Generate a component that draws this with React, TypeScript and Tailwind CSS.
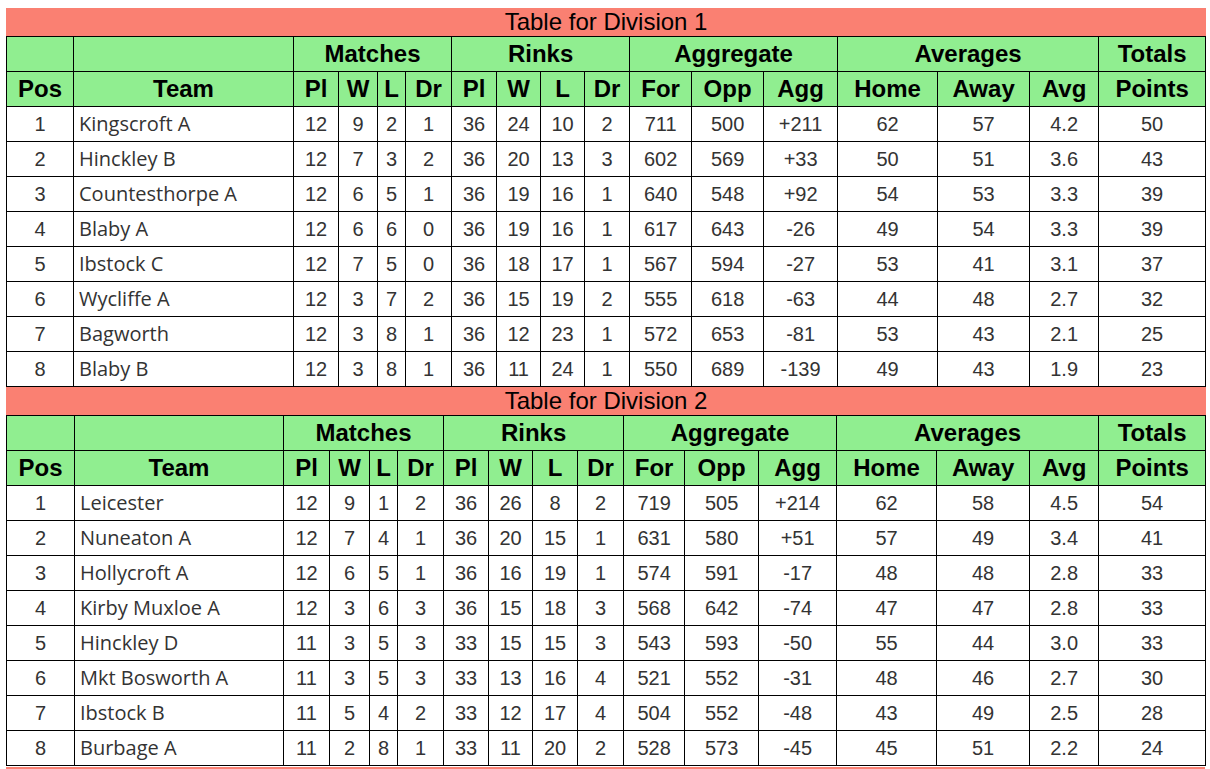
type Row = [number, string, ...(string | number)[]];

const division1: Row[] = [
  [1, "Kingscroft A", 12, 9, 2, 1, 36, 24, 10, 2, 711, 500, "+211", 62, 57, "4.2", 50],
  [2, "Hinckley B", 12, 7, 3, 2, 36, 20, 13, 3, 602, 569, "+33", 50, 51, "3.6", 43],
  [3, "Countesthorpe A", 12, 6, 5, 1, 36, 19, 16, 1, 640, 548, "+92", 54, 53, "3.3", 39],
  [4, "Blaby A", 12, 6, 6, 0, 36, 19, 16, 1, 617, 643, "-26", 49, 54, "3.3", 39],
  [5, "Ibstock C", 12, 7, 5, 0, 36, 18, 17, 1, 567, 594, "-27", 53, 41, "3.1", 37],
  [6, "Wycliffe A", 12, 3, 7, 2, 36, 15, 19, 2, 555, 618, "-63", 44, 48, "2.7", 32],
  [7, "Bagworth", 12, 3, 8, 1, 36, 12, 23, 1, 572, 653, "-81", 53, 43, "2.1", 25],
  [8, "Blaby B", 12, 3, 8, 1, 36, 11, 24, 1, 550, 689, "-139", 49, 43, "1.9", 23],
];

const division2: Row[] = [
  [1, "Leicester", 12, 9, 1, 2, 36, 26, 8, 2, 719, 505, "+214", 62, 58, "4.5", 54],
  [2, "Nuneaton A", 12, 7, 4, 1, 36, 20, 15, 1, 631, 580, "+51", 57, 49, "3.4", 41],
  [3, "Hollycroft A", 12, 6, 5, 1, 36, 16, 19, 1, 574, 591, "-17", 48, 48, "2.8", 33],
  [4, "Kirby Muxloe A", 12, 3, 6, 3, 36, 15, 18, 3, 568, 642, "-74", 47, 47, "2.8", 33],
  [5, "Hinckley D", 11, 3, 5, 3, 33, 15, 15, 3, 543, 593, "-50", 55, 44, "3.0", 33],
  [6, "Mkt Bosworth A", 11, 3, 5, 3, 33, 13, 16, 4, 521, 552, "-31", 48, 46, "2.7", 30],
  [7, "Ibstock B", 11, 5, 4, 2, 33, 12, 17, 4, 504, 552, "-48", 43, 49, "2.5", 28],
  [8, "Burbage A", 11, 2, 8, 1, 33, 11, 20, 2, 528, 573, "-45", 45, 51, "2.2", 24],
];

// column widths measured off the screenshot, one set per table (auto layout made them differ)
const cols1 = [
  "w-[67px]", "w-[220px]", "w-[45px]", "w-[39px]", "w-[28px]", "w-[46px]",
  "w-[45px]", "w-[44px]", "w-[44px]", "w-[45px]", "w-[62px]", "w-[72px]",
  "w-[74px]", "w-[100px]", "w-[92px]", "w-[69px]", "w-[107px]",
];
const cols2 = [
  "w-[68px]", "w-[209px]", "w-[46px]", "w-[40px]", "w-[28px]", "w-[46px]",
  "w-[45px]", "w-[44px]", "w-[45px]", "w-[46px]", "w-[61px]", "w-[74px]",
  "w-[78px]", "w-[100px]", "w-[93px]", "w-[69px]", "w-[107px]",
];

const subHeads = ["Pos", "Team", "Pl", "W", "L", "Dr", "Pl", "W", "L", "Dr", "For", "Opp", "Agg", "Home", "Away", "Avg", "Points"];

const th = "border border-black bg-[#90ee90] text-center text-[24px] leading-[28px] font-bold text-black p-0";
const td = "border border-black text-center text-[20px] text-[#333] p-0";

function DivisionTable({ title, rows, cols }: { title: string; rows: Row[]; cols: string[] }) {
  return (
    <table className="w-[1199px] table-fixed border-collapse font-['Liberation_Sans',Arial,sans-serif]">
      <caption className="h-[28px] bg-[#fa8072] text-center text-[24px] leading-[28px] text-black">
        {title}
      </caption>
      <colgroup>
        {cols.map((c, i) => (
          <col key={i} className={c} />
        ))}
      </colgroup>
      <thead>
        <tr className="h-[35px]">
          <th className={th}></th>
          <th className={th}></th>
          <th className={th} colSpan={4}>Matches</th>
          <th className={th} colSpan={4}>Rinks</th>
          <th className={th} colSpan={3}>Aggregate</th>
          <th className={th} colSpan={3}>Averages</th>
          <th className={th}>Totals</th>
        </tr>
        <tr className="h-[35px]">
          {subHeads.map((h, i) => (
            <th key={i} className={th}>
              {h}
            </th>
          ))}
        </tr>
      </thead>
      <tbody>
        {rows.map((r) => (
          <tr key={r[0]} className="h-[35px] bg-white">
            {r.map((v, i) =>
              i === 1 ? (
                <td key={i} className={`${td} text-left pl-[5px] text-[19.5px] font-['Open_Sans',sans-serif] whitespace-nowrap`}>
                  {v}
                </td>
              ) : (
                <td key={i} className={td}>
                  {v}
                </td>
              )
            )}
          </tr>
        ))}
      </tbody>
    </table>
  );
}

export default function App() {
  return (
    <div className="min-h-screen bg-white pt-[8px] pl-[6px]">
      <DivisionTable title="Table for Division 1" rows={division1} cols={cols1} />
      <DivisionTable title="Table for Division 2" rows={division2} cols={cols2} />
      {/* next division's title bar just peeks in at the bottom */}
      <div className="mt-[1px] h-[28px] w-[1199px] bg-[#fa8072]"></div>
    </div>
  );
}
